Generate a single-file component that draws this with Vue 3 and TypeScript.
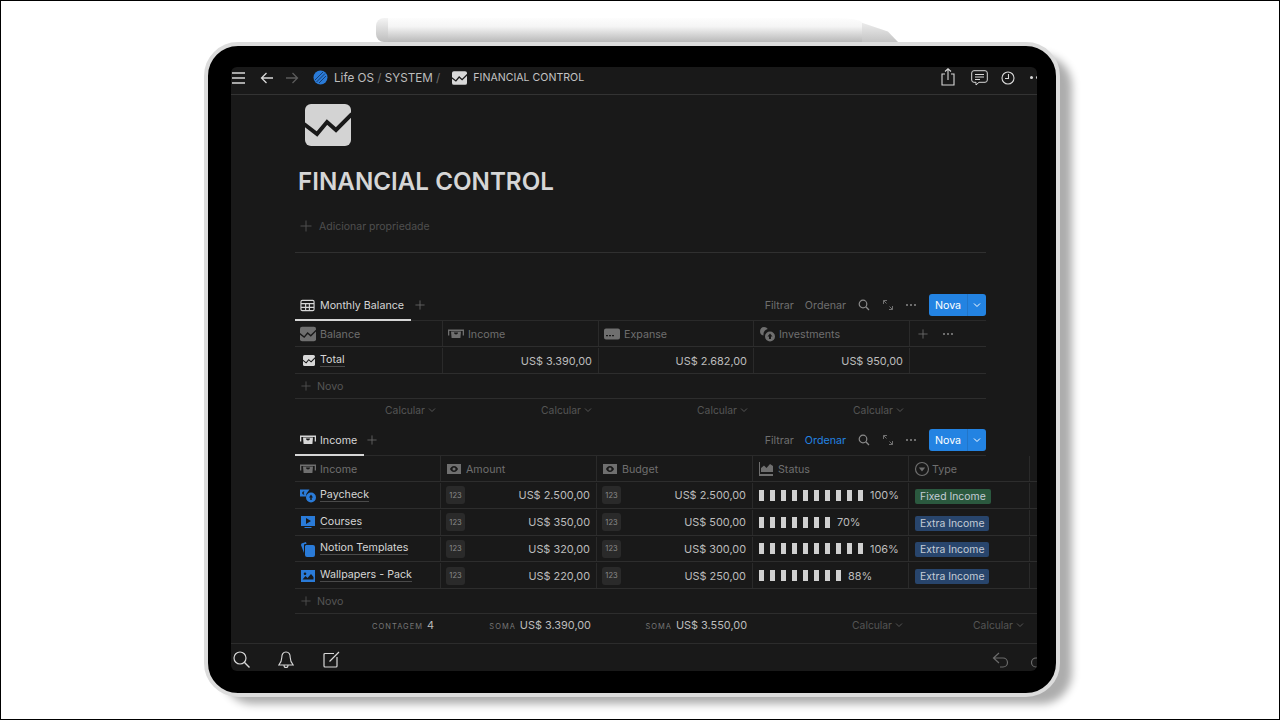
<script setup lang="ts">
interface Col {
  icon: string
  label: string
  width: number
}

interface IncomeRow {
  icon: string
  name: string
  amount: string
  budget: string
  segments: number
  percent: string
  type: string
  fixed: boolean
}

const balanceCols: Col[] = [
  { icon: 'chart', label: 'Balance', width: 148 },
  { icon: 'cash', label: 'Income', width: 156 },
  { icon: 'card', label: 'Expanse', width: 155 },
  { icon: 'coins', label: 'Investments', width: 156 },
]

const balanceValues = ['US$ 3.390,00', 'US$ 2.682,00', 'US$ 950,00']

const incomeCols: Col[] = [
  { icon: 'cash', label: 'Income', width: 146 },
  { icon: 'bill', label: 'Amount', width: 156 },
  { icon: 'bill', label: 'Budget', width: 156 },
  { icon: 'area', label: 'Status', width: 156 },
  { icon: 'select', label: 'Type', width: 121 },
]

const incomeRows: IncomeRow[] = [
  { icon: 'paycheck', name: 'Paycheck', amount: 'US$ 2.500,00', budget: 'US$ 2.500,00', segments: 10, percent: '100%', type: 'Fixed Income', fixed: true },
  { icon: 'play', name: 'Courses', amount: 'US$ 350,00', budget: 'US$ 500,00', segments: 7, percent: '70%', type: 'Extra Income', fixed: false },
  { icon: 'copy', name: 'Notion Templates', amount: 'US$ 320,00', budget: 'US$ 300,00', segments: 10, percent: '106%', type: 'Extra Income', fixed: false },
  { icon: 'image', name: 'Wallpapers - Pack', amount: 'US$ 220,00', budget: 'US$ 250,00', segments: 8, percent: '88%', type: 'Extra Income', fixed: false },
]

const balanceCalcs = [147, 156, 156, 156]
</script>

<template>
  <div class="page">
    <svg class="defs" xmlns="http://www.w3.org/2000/svg">
      <symbol id="chart" viewBox="0 0 46 42">
        <rect width="46" height="42" rx="6" fill="currentColor" />
        <path d="M-1 20 12 30 22 18 31 26 47 10" fill="none" stroke="#191919" stroke-width="4" />
      </symbol>
      <symbol id="cash" viewBox="0 0 16 16">
        <path d="M0 3.500h16v6h-1.300V5H1.300v4.500H0zM3 5.500h10l-.6 6.500H3.600zM6 6.500c0 2.500 4 2.500 4 0z" fill="currentColor" fill-rule="evenodd" />
      </symbol>
      <symbol id="bill" viewBox="0 0 16 16">
        <path d="M1 3h14v10H1zm7 2C6 5 4.500 6.700 4 8c.5 1.300 2 3 4 3s3.500-1.700 4-3c-.5-1.300-2-3-4-3zm0 1.500a1.500 1.500 0 1 1 0 3 1.500 1.500 0 0 1 0-3z" fill="currentColor" fill-rule="evenodd" />
      </symbol>
      <symbol id="card" viewBox="0 0 16 16">
        <path d="M2 2.500h12a2 2 0 0 1 2 2v7a2 2 0 0 1-2 2H2a2 2 0 0 1-2-2v-7a2 2 0 0 1 2-2zM2 9v1.200h2V9zm3 0v1.200h2V9zm3 0v1.200h2V9z" fill="currentColor" fill-rule="evenodd" />
      </symbol>
      <symbol id="coins" viewBox="0 0 16 16">
        <path d="M5 1a4.500 4.500 0 0 1 3.800 2.100A6 6 0 0 0 4.500 9.500 4.300 4.300 0 0 1 5 1z" fill="currentColor" />
        <path d="M11 5.500a5 5 0 1 1 0 10 5 5 0 0 1 0-10zm0 2L8.500 10.500H10V13h2v-2.500h1.500z" fill="currentColor" fill-rule="evenodd" />
      </symbol>
      <symbol id="paycheck" viewBox="0 0 16 16">
        <path d="M0 2.500h9.500L8 4.500a6 6 0 0 0-1.800 5H0zM3 4.500 2 6l1 1.500h1.500L3.500 6 4.500 4.500z" fill="currentColor" fill-rule="evenodd" />
        <path d="M11 5.500a5 5 0 1 1 0 10 5 5 0 0 1 0-10zm0 2L9 10.500h1.300V13h1.400v-2.500H13z" fill="currentColor" fill-rule="evenodd" />
      </symbol>
      <symbol id="play" viewBox="0 0 16 16">
        <path d="M1 2h14v10H1zm5 2v6l5-3zM4.500 13h7v1h-7z" fill="currentColor" fill-rule="evenodd" />
      </symbol>
      <symbol id="copy" viewBox="0 0 16 16">
        <path d="M6 4h7a2 2 0 0 1 2 2v8a2 2 0 0 1-2 2H7a2 2 0 0 1-2-2V5zM1.500 2.500 6 1l.5 2H5a1 1 0 0 0-1 1v8L1 4z" fill="currentColor" />
      </symbol>
      <symbol id="image" viewBox="0 0 16 16">
        <path d="M1 2h14v12H1zm1.500 9.500h11V9L11 6 7.500 10 5.500 8zM5 4.500a1.300 1.300 0 1 0 0 2.600 1.300 1.300 0 0 0 0-2.600z" fill="currentColor" fill-rule="evenodd" />
      </symbol>
      <symbol id="area" viewBox="0 0 16 16">
        <path d="M1 1h1v12h13v2H1zM3 11V7l3-2.500L8.500 7 12 3l3 2v6z" fill="currentColor" />
      </symbol>
      <symbol id="select" viewBox="0 0 16 16">
        <circle cx="8" cy="8" r="6.500" fill="none" stroke="currentColor" stroke-width="1.200" />
        <path d="M4.800 6.500h6.400L8 10.500z" fill="currentColor" />
      </symbol>
      <symbol id="table" viewBox="0 0 16 16">
        <path d="M2.500 2.500h11a1.500 1.500 0 0 1 1.500 1.500v8a1.500 1.500 0 0 1-1.500 1.500h-11A1.500 1.500 0 0 1 1 12V4a1.500 1.500 0 0 1 1.500-1.500zM1 6h14M1 10h14M6 6v7.500M10 6v7.500" fill="none" stroke="currentColor" stroke-width="1.200" />
      </symbol>
      <symbol id="plus" viewBox="0 0 12 12">
        <path d="M6 .5v11M.5 6h11" fill="none" stroke="currentColor" stroke-width="1" />
      </symbol>
      <symbol id="chevron" viewBox="0 0 8 8">
        <path d="M1 2.500 4 5.500 7 2.500" fill="none" stroke="currentColor" stroke-width="1" />
      </symbol>
      <symbol id="search" viewBox="0 0 12 12">
        <circle cx="5" cy="5" r="3.800" fill="none" stroke="currentColor" stroke-width="1.200" />
        <path d="M7.800 7.800 11 11" fill="none" stroke="currentColor" stroke-width="1.300" />
      </symbol>
      <symbol id="expand" viewBox="0 0 12 12">
        <path d="M1.500 1.500 4.500 4.500M7.500 7.500 10.500 10.500M1.500 5V1.500H5M10.500 7v3.500H7" fill="none" stroke="currentColor" stroke-width="1" />
      </symbol>
    </svg>

    <div class="pen">
      <span class="pen-tip"></span>
      <span class="pen-body"></span>
      <span class="pen-cap"></span>
    </div>

    <div class="device">
      <div class="screen">
        <header class="topbar">
          <svg class="tb-menu" width="14" height="14" viewBox="0 0 14 14">
            <path d="M0 2h13M0 7h13M0 12h13" stroke="#d8d8d8" stroke-width="1.700" />
          </svg>
          <svg class="tb-back" width="14" height="14" viewBox="0 0 14 14">
            <path d="M13 7H1.500M6.500 2 1.500 7l5 5" fill="none" stroke="#d8d8d8" stroke-width="1.300" />
          </svg>
          <svg class="tb-forward" width="14" height="14" viewBox="0 0 14 14">
            <path d="M1 7h11.500M7.500 2l5 5-5 5" fill="none" stroke="#5b5b5b" stroke-width="1.300" />
          </svg>
          <svg class="tb-logo" width="15" height="15" viewBox="0 0 15 15">
            <circle cx="7.500" cy="7.500" r="7" fill="#2a7bd8" />
            <path d="M2 10 10 2M3.500 12 12 3.500M6 13l7-7" stroke="#163d70" stroke-width="1" />
          </svg>
          <span class="crumb">Life OS <i>/</i> SYSTEM <i>/</i></span>
          <svg class="tb-page" width="15" height="14"><use href="#chart" /></svg>
          <span class="crumb-page">FINANCIAL CONTROL</span>
          <span class="grow"></span>
          <svg class="tb-share" width="16" height="18" viewBox="0 0 16 18">
            <path d="M5 6H2v11h12V6h-3M8 12V1M5 3.500 8 .8l3 2.700" fill="none" stroke="#d8d8d8" stroke-width="1.100" />
          </svg>
          <svg class="tb-comment" width="17" height="16" viewBox="0 0 17 16">
            <path d="M3 .7h11A2.300 2.300 0 0 1 16.300 3v7a2.300 2.300 0 0 1-2.300 2.300H8L5 15v-2.700H3A2.300 2.300 0 0 1 .7 10V3A2.300 2.300 0 0 1 3 .7zM4 4.500h9M4 7h9M4 9.500h5" fill="none" stroke="#d8d8d8" stroke-width="1" />
          </svg>
          <svg class="tb-clock" width="14" height="14" viewBox="0 0 14 14">
            <circle cx="7" cy="7" r="6" fill="none" stroke="#d8d8d8" stroke-width="1.100" />
            <path d="M7.500 3v4.500H4" fill="none" stroke="#d8d8d8" stroke-width="1.100" />
          </svg>
          <span class="tb-dots"><b></b><b></b></span>
        </header>

        <main class="content">
          <svg class="page-icon" width="46" height="42"><use href="#chart" /></svg>
          <h1 class="title">FINANCIAL CONTROL</h1>
          <div class="add-prop">
            <svg width="12" height="12"><use href="#plus" /></svg>
            <span>Adicionar propriedade</span>
          </div>
          <div class="divider"></div>

          <section class="db db-balance">
            <div class="db-head">
              <div class="tab tab-balance">
                <svg width="15" height="15"><use href="#table" /></svg>
                <span>Monthly Balance</span>
                <svg class="tab-plus" width="10" height="10"><use href="#plus" /></svg>
              </div>
              <div class="actions">
                <span>Filtrar</span>
                <span>Ordenar</span>
                <svg class="ic-search" width="12" height="12"><use href="#search" /></svg>
                <svg class="ic-expand" width="12" height="12"><use href="#expand" /></svg>
                <span class="more"><b></b><b></b><b></b></span>
                <div class="new-btn"><span class="new-label">Nova</span><span class="new-arrow"><svg width="8" height="8"><use href="#chevron" /></svg></span></div>
              </div>
            </div>
            <div class="row head-row">
              <div v-for="col in balanceCols" :key="col.label" class="cell head-cell" :style="{ width: col.width + 'px' }">
                <svg width="16" height="16" :class="'ic-' + col.icon"><use :href="'#' + col.icon" /></svg>
                <span>{{ col.label }}</span>
              </div>
              <div class="cell head-tail">
                <svg width="10" height="10"><use href="#plus" /></svg>
                <span class="more"><b></b><b></b><b></b></span>
              </div>
            </div>
            <div class="row body-row">
              <div class="cell name-cell" :style="{ width: balanceCols[0].width + 'px' }">
                <svg class="total-icon" width="12" height="11"><use href="#chart" /></svg>
                <span class="link">Total</span>
              </div>
              <div v-for="(value, i) in balanceValues" :key="value" class="cell num-cell" :style="{ width: balanceCols[i + 1].width + 'px' }">{{ value }}</div>
            </div>
            <div class="row new-row">
              <svg width="10" height="10"><use href="#plus" /></svg>
              <span>Novo</span>
            </div>
            <div class="calc-row">
              <div v-for="(w, i) in balanceCalcs" :key="i" class="calc" :style="{ width: w + 'px' }">
                Calcular <svg width="8" height="8"><use href="#chevron" /></svg>
              </div>
            </div>
          </section>

          <section class="db db-income">
            <div class="db-head">
              <div class="tab tab-income">
                <svg width="16" height="16"><use href="#cash" /></svg>
                <span>Income</span>
                <svg class="tab-plus" width="10" height="10"><use href="#plus" /></svg>
              </div>
              <div class="actions">
                <span>Filtrar</span>
                <span class="active">Ordenar</span>
                <svg class="ic-search" width="12" height="12"><use href="#search" /></svg>
                <svg class="ic-expand" width="12" height="12"><use href="#expand" /></svg>
                <span class="more"><b></b><b></b><b></b></span>
                <div class="new-btn"><span class="new-label">Nova</span><span class="new-arrow"><svg width="8" height="8"><use href="#chevron" /></svg></span></div>
              </div>
            </div>
            <div class="wide">
              <div class="row head-row">
                <div v-for="col in incomeCols" :key="col.label" class="cell head-cell" :style="{ width: col.width + 'px' }">
                  <svg width="16" height="16" :class="'ic-' + col.icon"><use :href="'#' + col.icon" /></svg>
                  <span>{{ col.label }}</span>
                </div>
              </div>
              <div v-for="row in incomeRows" :key="row.name" class="row body-row">
                <div class="cell name-cell" :style="{ width: incomeCols[0].width + 'px' }">
                  <svg class="blue-icon" width="16" height="16"><use :href="'#' + row.icon" /></svg>
                  <span class="link">{{ row.name }}</span>
                </div>
                <div class="cell money-cell" :style="{ width: incomeCols[1].width + 'px' }">
                  <span class="num-badge">123</span>
                  <span>{{ row.amount }}</span>
                </div>
                <div class="cell money-cell" :style="{ width: incomeCols[2].width + 'px' }">
                  <span class="num-badge">123</span>
                  <span>{{ row.budget }}</span>
                </div>
                <div class="cell status-cell" :style="{ width: incomeCols[3].width + 'px' }">
                  <span class="bars"><i v-for="n in row.segments" :key="n"></i></span>
                  <span>{{ row.percent }}</span>
                </div>
                <div class="cell type-cell" :style="{ width: incomeCols[4].width + 'px' }">
                  <span class="tag" :class="row.fixed ? 'tag-fixed' : 'tag-extra'">{{ row.type }}</span>
                </div>
              </div>
              <div class="row new-row">
                <svg width="10" height="10"><use href="#plus" /></svg>
                <span>Novo</span>
              </div>
              <div class="sum-row">
                <div class="sum" :style="{ width: '145px' }"><small>CONTAGEM</small> 4</div>
                <div class="sum" :style="{ width: '157px' }"><small>SOMA</small> US$ 3.390,00</div>
                <div class="sum" :style="{ width: incomeCols[2].width + 'px' }"><small>SOMA</small> US$ 3.550,00</div>
                <div class="calc" :style="{ width: incomeCols[3].width + 'px' }">Calcular <svg width="8" height="8"><use href="#chevron" /></svg></div>
                <div class="calc" :style="{ width: incomeCols[4].width + 'px' }">Calcular <svg width="8" height="8"><use href="#chevron" /></svg></div>
              </div>
            </div>
          </section>
        </main>

        <footer class="bottombar">
          <svg class="bb-search" width="17" height="17" viewBox="0 0 17 17">
            <circle cx="7" cy="7" r="6" fill="none" stroke="#d8d8d8" stroke-width="1.200" />
            <path d="M11.300 11.300 16.500 16.500" stroke="#d8d8d8" stroke-width="1.400" />
          </svg>
          <svg class="bb-bell" width="16" height="18" viewBox="0 0 16 18">
            <path d="M8 1C5 1 3.800 3.500 3.800 6.500c0 3.500-1.300 5.500-3 7.500h14.400c-1.700-2-3-4-3-7.500C12.200 3.500 11 1 8 1zM6 14.500a2 2 0 0 0 4 0" fill="none" stroke="#d8d8d8" stroke-width="1.100" />
          </svg>
          <svg class="bb-edit" width="17" height="17" viewBox="0 0 17 17">
            <path d="M11 2.500H2A1 1 0 0 0 1 3.500v11.500a1 1 0 0 0 1 1h11a1 1 0 0 0 1-1V6M6.500 10.500 16 1" fill="none" stroke="#d8d8d8" stroke-width="1.200" />
          </svg>
          <span class="grow"></span>
          <svg class="bb-undo" width="17" height="16" viewBox="0 0 17 16">
            <path d="M7 1 1.500 6 7 11M1.500 6H11a4.500 4.500 0 0 1 0 9H8" fill="none" stroke="#6b6b6b" stroke-width="1.200" />
          </svg>
          <svg class="bb-redo" width="6" height="16" viewBox="0 0 6 16">
            <path d="M6 6H5a4.500 4.500 0 0 0 0 9h1" fill="none" stroke="#6b6b6b" stroke-width="1.200" />
          </svg>
        </footer>
      </div>
    </div>
  </div>
</template>

<style scoped>
.page {
  position: relative;
  box-sizing: border-box;
  width: 1280px;
  height: 720px;
  border: 1px solid #000;
  background: #fff;
  overflow: hidden;
  padding: 41px 0 0 203px;
  font-family: Inter, "Liberation Sans", sans-serif;
  font-size: 10.700px;
  color: #d4d4d4;
}

.defs {
  display: none;
}

.grow {
  flex: 1;
}

/* pencil lies on top of the tablet edge */
.pen {
  position: absolute;
  left: 375px;
  top: 17px;
  display: flex;
  height: 24px;
}

.pen-tip {
  width: 12px;
  border-radius: 8px 0 0 8px;
  background: linear-gradient(#f4f4f4, #bdbdbd);
}

.pen-body {
  width: 474px;
  border-top-right-radius: 24px 5px;
  background: linear-gradient(#fdfdfd 0%, #f5f5f5 35%, #b9b9b9 100%);
}

.pen-cap {
  width: 36px;
  clip-path: polygon(0 20%, 72% 56%, 100% 100%, 0 100%);
  background: linear-gradient(#f6f6f6, #c4c4c4);
}

.device {
  position: relative;
  box-sizing: border-box;
  width: 856px;
  height: 655px;
  padding: 21px 23px;
  border: 4px solid #dcdcdc;
  border-radius: 34px;
  background: #000;
  box-shadow: 15px 10px 8px -3px #adadad;
}

.screen {
  display: flex;
  flex-direction: column;
  width: 806px;
  height: 604px;
  border-radius: 6px;
  background: #191919;
  overflow: hidden;
}

.topbar {
  display: flex;
  align-items: center;
  flex: none;
  height: 28px;
  padding: 0 0 6px 0;
  box-sizing: border-box;
  border-bottom: 1px solid #333;
  color: #cfcfcf;
}

.tb-menu {
  margin-left: 1px;
}

.tb-back {
  margin-left: 14px;
}

.tb-forward {
  margin-left: 11px;
}

.tb-logo {
  margin-left: 14px;
}

.crumb {
  margin-left: 6px;
  font-size: 11.700px;
  color: #bdbdbd;
}

.crumb i {
  font-style: normal;
  color: #6e6e6e;
}

.tb-page {
  margin-left: 12px;
  color: #d8d8d8;
}

.crumb-page {
  margin-left: 6px;
  font-size: 10.600px;
  color: #c4c4c4;
}

.tb-share {
  margin-bottom: 2px;
}

.tb-comment {
  margin-left: 15px;
}

.tb-clock {
  margin-left: 13px;
}

.tb-dots {
  display: flex;
  gap: 3px;
  margin-left: 15px;
  width: 7px;
  overflow: hidden;
}

.tb-dots b {
  flex: none;
  width: 3px;
  height: 3px;
  border-radius: 50%;
  background: #d8d8d8;
}

.content {
  flex: 1;
  min-height: 0;
  padding-left: 64px;
}

.page-icon {
  display: block;
  margin: 9px 0 0 10px;
  color: #d3d3d3;
}

.title {
  margin: 21px 0 0 3px;
  font-size: 24.200px;
  line-height: 30px;
  font-weight: 600;
  color: #d6d6d6;
}

.add-prop {
  display: flex;
  align-items: center;
  gap: 7px;
  margin: 21px 0 0 5px;
  height: 16px;
  font-size: 10.500px;
  color: #4f4f4f;
}

.divider {
  width: 691px;
  margin-top: 18px;
  border-top: 1px solid #303030;
}

.db {
  width: 691px;
}

.db-balance {
  margin-top: 39px;
}

.db-income {
  margin-top: 6px;
}

.db-head {
  display: flex;
  align-items: center;
  justify-content: space-between;
  height: 28px;
  border-bottom: 1px solid #2a2a2a;
}

.tab {
  display: flex;
  align-items: center;
  box-sizing: border-box;
  height: 28px;
  margin-bottom: -1px;
  padding: 0 0 1px 5px;
  gap: 4px;
  border-bottom: 2px solid #d6d6d6;
  color: #d6d6d6;
}

.tab-balance {
  width: 116px;
  gap: 5px;
}

.tab-income {
  width: 69px;
}

.tab-plus {
  flex: none;
  margin-left: 6px;
  margin-right: -20px;
  color: #6a6a6a;
}

.actions {
  display: flex;
  align-items: center;
  padding-bottom: 2px;
  color: #6f6f6f;
}

.actions span + span {
  margin-left: 11px;
}

.active {
  color: #2383e2;
}

.ic-search {
  margin-left: 12px;
  color: #8a8a8a;
}

.ic-expand {
  margin-left: 12px;
  color: #6f6f6f;
}

.more {
  display: inline-flex;
  gap: 2px;
  margin-left: 12px;
}

.more b {
  width: 2px;
  height: 2px;
  border-radius: 50%;
  background: #8a8a8a;
}

.new-btn {
  display: flex;
  align-items: center;
  width: 57px;
  height: 22px;
  margin-left: 13px;
  border-radius: 3px;
  background: #2383e2;
  color: #fff;
}

.new-label {
  width: 38px;
  text-align: center;
}

.actions .new-arrow {
  display: flex;
  align-items: center;
  justify-content: center;
  align-self: stretch;
  flex: 1;
  margin-left: 0;
  border-left: 1px solid #2275c8;
}

.row {
  display: flex;
  align-items: stretch;
  box-sizing: border-box;
  border-bottom: 1px solid #2d2d2d;
}

.wide {
  width: 742px;
}

.cell {
  display: flex;
  align-items: center;
  flex: none;
  box-sizing: border-box;
  border-right: 1px solid #2a2a2a;
}

.head-row {
  height: 26px;
  color: #6f6f6f;
}

.head-cell {
  gap: 3px;
  padding: 1px 0 0 5px;
}

.head-cell span {
  margin-left: 1px;
}

.ic-select {
  margin-right: -2px;
}

.head-tail {
  flex: 1;
  border-right: 0;
  padding-left: 8px;
}

.head-tail .more {
  margin-left: 15px;
}

.body-row {
  height: 26.750px;
  padding-top: 1px;
  font-size: 10.900px;
}

.db-balance .body-row {
  height: 27px;
}

.name-cell {
  gap: 4px;
  padding-left: 5px;
  font-size: 10.700px;
}

.total-icon {
  margin: 0 1px 0 3px;
  color: #d8d8d8;
}

.blue-icon {
  color: #2a7bd8;
}

.link {
  border-bottom: 1px solid #4a4a4a;
  line-height: 12px;
  color: #d6d6d6;
}

.num-cell {
  justify-content: flex-end;
  padding-right: 6px;
  color: #bdbdbd;
}

.money-cell {
  justify-content: space-between;
  padding: 0 6px 0 5px;
  color: #bdbdbd;
}

.num-badge {
  display: flex;
  align-items: center;
  justify-content: center;
  width: 19px;
  height: 18px;
  border-radius: 3px;
  background: #2a2a2a;
  font-size: 7.500px;
  color: #8a8a8a;
}

.status-cell {
  gap: 7px;
  padding-left: 6px;
  color: #bdbdbd;
}

.bars {
  display: flex;
  gap: 6px;
}

.bars i {
  width: 5px;
  height: 11px;
  background: #d0d0d0;
}

.type-cell {
  padding: 2px 0 0 6px;
}

.tag {
  padding: 0 5px;
  height: 15px;
  line-height: 15px;
  border-radius: 2px;
  font-size: 10.400px;
  color: #c5ccd6;
}

.tag-fixed {
  background: #2b593f;
}

.tag-extra {
  background: #28456c;
}

.new-row {
  display: flex;
  align-items: center;
  gap: 6px;
  height: 25px;
  padding-left: 6px;
  color: #555;
}

.calc-row,
.sum-row {
  display: flex;
  height: 22px;
}

.calc {
  display: flex;
  align-items: center;
  justify-content: flex-end;
  flex: none;
  gap: 3px;
  box-sizing: border-box;
  padding-right: 6px;
  font-size: 10.300px;
  color: #555;
}

.sum {
  display: flex;
  align-items: center;
  justify-content: flex-end;
  flex: none;
  gap: 4px;
  box-sizing: border-box;
  padding-right: 6px;
  font-size: 10.900px;
  color: #bdbdbd;
}

.sum small {
  margin-top: 3px;
  font-size: 7.500px;
  letter-spacing: 1px;
  color: #777;
}

.bottombar {
  display: flex;
  align-items: center;
  flex: none;
  height: 28px;
  padding-top: 4px;
  box-sizing: border-box;
  border-top: 1px solid #2c2c2c;
}

.bb-search {
  margin-left: 2px;
}

.bb-bell {
  margin-left: 28px;
}

.bb-edit {
  margin-left: 29px;
}

.bb-redo {
  margin-left: 22px;
}
</style>

<style>
html,
body {
  margin: 0;
  background: #fff;
}
</style>
